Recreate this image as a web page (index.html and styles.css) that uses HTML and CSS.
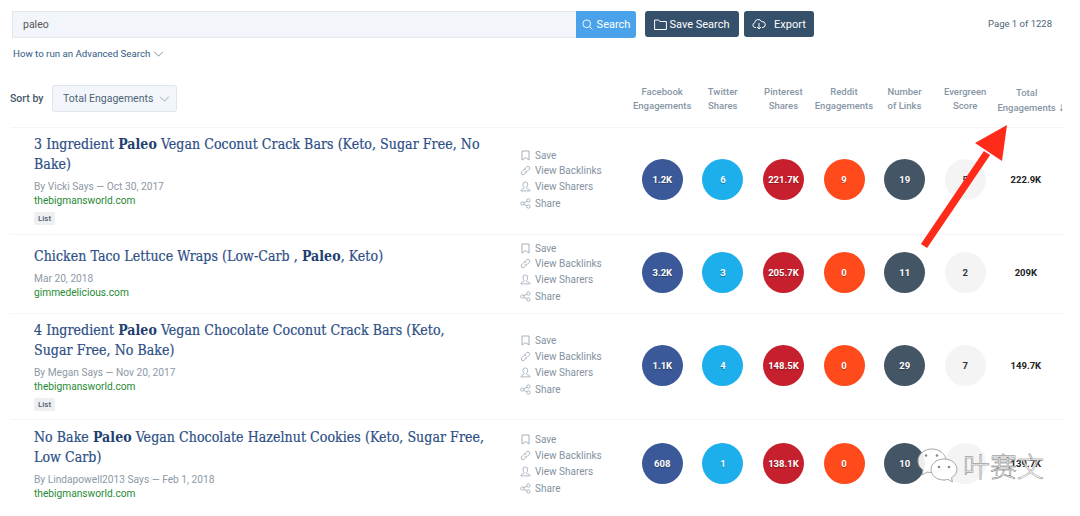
FILE: index.html
```html
<!DOCTYPE html>
<html lang="en">
<head>
  <meta charset="UTF-8" />
  <meta name="viewport" content="width=device-width, initial-scale=1.0"/>
  <title>Content Search - paleo</title>
  <link rel="stylesheet" href="styles.css">
</head>
<body>
  <svg class="defs" width="0" height="0">
    <symbol id="i-save" viewBox="0 0 10 11"><path d="M1.500 1h7v9L5 7.600 1.500 10z"/></symbol>
    <symbol id="i-link" viewBox="0 0 12 12"><path d="M5 4.200 7.400 1.800a2 2 0 0 1 2.800 2.800L7.800 7a2 2 0 0 1-2.600.2"/><path d="M7 7.800 4.600 10.200a2 2 0 0 1-2.800-2.800L4.200 5a2 2 0 0 1 2.600-.2"/></symbol>
    <symbol id="i-user" viewBox="0 0 12 12"><path d="M6 1a2.800 2.800 0 0 0-2.800 3c0 1.400.7 2.400 1.300 3 .2.600 0 1-.8 1.300C2.500 8.800 1.200 9.300 1 10.800h10c-.2-1.500-1.500-2-3.100-2.500-.8-.3-1-.7-.8-1.300.6-.6 1.300-1.600 1.300-3A2.800 2.800 0 0 0 6 1z"/></symbol>
    <symbol id="i-share" viewBox="0 0 12 12"><circle cx="2.600" cy="6" r="1.800"/><circle cx="9.200" cy="2.700" r="1.800"/><circle cx="9.200" cy="9.300" r="1.800"/><path d="M4.200 5.200 7.600 3.500M4.200 6.800l3.400 1.700"/></symbol>
    <symbol id="i-chev" viewBox="0 0 12 7"><path d="M1 1l5 5 5-5"/></symbol>
  </svg>

  <div class="page">
    <div class="topbar">
      <div class="search">
        <div class="search-input">paleo</div>
        <button class="search-btn">
          <svg class="btn-icon" viewBox="0 0 12 12"><circle cx="5.200" cy="5.200" r="4.200"/><path d="M8.300 8.300 11.300 11.300"/></svg>
          Search
        </button>
      </div>
      <button class="dark-btn save-btn">
        <svg class="btn-icon folder" viewBox="0 0 13 11"><path d="M.6 1h4l1.200 1.500h6.600v8H.6z"/></svg>
        Save Search
      </button>
      <button class="dark-btn export-btn">
        <svg class="btn-icon cloud" viewBox="0 0 14 11"><path d="M4 9H3a2.400 2.400 0 0 1-.3-4.700A3.600 3.600 0 0 1 9.600 3.200 2.900 2.900 0 0 1 11 9h-1"/><path d="M7 4.500v6M5 8.500l2 2 2-2"/></svg>
        Export
      </button>
      <div class="pager">Page 1 of 1228</div>
    </div>

    <a class="adv-link">How to run an Advanced Search
      <svg class="chev"><use href="#i-chev"/></svg>
    </a>

    <div class="sortbar">
      <span class="sort-label">Sort by</span>
      <div class="sort-select">Total Engagements <svg class="chev big"><use href="#i-chev"/></svg></div>
      <div class="columns">
        <div>Facebook<br>Engagements</div>
        <div>Twitter<br>Shares</div>
        <div>Pinterest<br>Shares</div>
        <div>Reddit<br>Engagements</div>
        <div>Number<br>of Links</div>
        <div>Evergreen<br>Score</div>
        <div class="sorted">Total<br>Engagements <span class="down">↓</span></div>
      </div>
    </div>

    <div class="row row-tall">
      <div class="info">
        <a class="title">3 Ingredient <b>Paleo</b> Vegan Coconut Crack Bars (Keto, Sugar Free, No Bake)</a>
        <div class="meta">By Vicki Says — Oct 30, 2017</div>
        <div class="domain">thebigmansworld.com</div>
        <span class="tag">List</span>
      </div>
      <div class="actions">
        <div class="act"><svg><use href="#i-save"/></svg>Save</div>
        <div class="act"><svg><use href="#i-link"/></svg>View Backlinks</div>
        <div class="act"><svg><use href="#i-user"/></svg>View Sharers</div>
        <div class="act"><svg><use href="#i-share"/></svg>Share</div>
      </div>
      <div class="stats">
        <div class="dot fb">1.2K</div>
        <div class="dot tw">6</div>
        <div class="dot pin">221.7K</div>
        <div class="dot red">9</div>
        <div class="dot links">19</div>
        <div class="dot ever">5</div>
        <div class="total">222.9K</div>
      </div>
    </div>

    <div class="row row-short">
      <div class="info">
        <a class="title">Chicken Taco Lettuce Wraps (Low-Carb , <b>Paleo</b>, Keto)</a>
        <div class="meta">Mar 20, 2018</div>
        <div class="domain">gimmedelicious.com</div>
      </div>
      <div class="actions">
        <div class="act"><svg><use href="#i-save"/></svg>Save</div>
        <div class="act"><svg><use href="#i-link"/></svg>View Backlinks</div>
        <div class="act"><svg><use href="#i-user"/></svg>View Sharers</div>
        <div class="act"><svg><use href="#i-share"/></svg>Share</div>
      </div>
      <div class="stats">
        <div class="dot fb">3.2K</div>
        <div class="dot tw">3</div>
        <div class="dot pin">205.7K</div>
        <div class="dot red">0</div>
        <div class="dot links">11</div>
        <div class="dot ever">2</div>
        <div class="total">209K</div>
      </div>
    </div>

    <div class="row row-tall">
      <div class="info">
        <a class="title">4 Ingredient <b>Paleo</b> Vegan Chocolate Coconut Crack Bars (Keto, Sugar Free, No Bake)</a>
        <div class="meta">By Megan Says — Nov 20, 2017</div>
        <div class="domain">thebigmansworld.com</div>
        <span class="tag">List</span>
      </div>
      <div class="actions">
        <div class="act"><svg><use href="#i-save"/></svg>Save</div>
        <div class="act"><svg><use href="#i-link"/></svg>View Backlinks</div>
        <div class="act"><svg><use href="#i-user"/></svg>View Sharers</div>
        <div class="act"><svg><use href="#i-share"/></svg>Share</div>
      </div>
      <div class="stats">
        <div class="dot fb">1.1K</div>
        <div class="dot tw">4</div>
        <div class="dot pin">148.5K</div>
        <div class="dot red">0</div>
        <div class="dot links">29</div>
        <div class="dot ever">7</div>
        <div class="total">149.7K</div>
      </div>
    </div>

    <div class="row row-last">
      <div class="info">
        <a class="title">No Bake <b>Paleo</b> Vegan Chocolate Hazelnut Cookies (Keto, Sugar Free, Low Carb)</a>
        <div class="meta">By Lindapowell2013 Says — Feb 1, 2018</div>
        <div class="domain">thebigmansworld.com</div>
      </div>
      <div class="actions">
        <div class="act"><svg><use href="#i-save"/></svg>Save</div>
        <div class="act"><svg><use href="#i-link"/></svg>View Backlinks</div>
        <div class="act"><svg><use href="#i-user"/></svg>View Sharers</div>
        <div class="act"><svg><use href="#i-share"/></svg>Share</div>
      </div>
      <div class="stats">
        <div class="dot fb">608</div>
        <div class="dot tw">1</div>
        <div class="dot pin">138.1K</div>
        <div class="dot red">0</div>
        <div class="dot links">10</div>
        <div class="dot ever"></div>
        <div class="total">139.7K</div>
      </div>
    </div>
  </div>

  <!-- annotation arrow on top of the screenshot -->
  <svg class="arrow" viewBox="0 0 100 130">
    <path d="M6 126 69 33" fill="none" stroke="#fe2b1a" stroke-width="7.500"/>
    <path d="M89 5 57 23 84 41z" fill="#fe2b1a"/>
  </svg>

  <!-- wechat watermark -->
  <div class="watermark">
    <svg class="wechat" viewBox="0 0 42 36">
      <path class="bub" d="M15 1C7.500 1 1 6 1 13c0 4 2 7 5 9l-1 5 5-3c1 .3 3 .5 5 .5 8 0 14-5 14-11.500S23 1 15 1z"/>
      <path class="bub" d="M27 11c-7.500 0-13 4.800-13 10.500S19.500 32 27 32c1.500 0 3-.2 4-.6l4.500 2.600-1-4.200c3-1.800 5.500-4.800 5.500-8.300C40 15.800 34.500 11 27 11z"/>
      <circle cx="9" cy="7.500" r="1.300"/><circle cx="20" cy="7.500" r="1.300"/><circle cx="22" cy="19" r="1.300"/><circle cx="32" cy="19" r="1.300"/>
    </svg>
    <span class="wm-text">叶赛文</span>
  </div>
</body>
</html>
```

FILE: styles.css
```css
* { box-sizing: border-box; }
html, body { height: 516px; overflow: hidden; }
body {
  margin: 0;
  background: #fff;
  color: #34495e;
  font-family: Roboto, "Liberation Sans", sans-serif;
  font-size: 10px;
  position: relative;
}
.defs { position: absolute; }
.page { padding: 11px 15px 0 10px; }

/* top bar */
.topbar {
  display: flex;
  align-items: flex-start;
  padding-left: 2px;
  height: 27px;
}
.search { display: flex; width: 624px; height: 27px; }
.search-input {
  flex: 1;
  background: #f2f6fa;
  border: 1px solid #e2e7ec;
  border-right: none;
  color: #555;
  font-size: 10.500px;
  line-height: 25px;
  padding-left: 10px;
}
.search-btn {
  width: 60px;
  background: #4aa3ea;
  color: #fff;
  border: none;
  border-radius: 0 3px 3px 0;
  font: 400 11px Roboto, sans-serif;
  padding: 0;
  display: flex;
  align-items: center;
  justify-content: center;
  gap: 4px;
}
.btn-icon { width: 11px; height: 11px; fill: none; stroke: currentColor; stroke-width: 1; }
.btn-icon.folder { width: 13px; }
.btn-icon.cloud { width: 14px; height: 12px; }
.dark-btn {
  height: 26px;
  background: #35506b;
  color: #fff;
  border: none;
  border-radius: 3px;
  font: 400 11px Roboto, sans-serif;
  padding: 0;
  display: flex;
  align-items: center;
  justify-content: center;
}
.save-btn { width: 94px; margin-left: 9px; gap: 2px; }
.export-btn { width: 70px; margin-left: 5px; gap: 8px; }
.pager { margin-left: auto; margin-right: 13px; line-height: 26px; color: #4d6478; font-size: 9.500px; }

.adv-link {
  display: block;
  margin: 10px 0 0 3px;
  color: #2f5a85;
  font-size: 9.700px;
  line-height: 12px;
}
.chev { width: 11px; height: 6px; fill: none; stroke: #6b7f92; stroke-width: 1; }
.chev.big { width: 11px; height: 6px; margin-left: 3px; stroke: #8a9aaa; }

/* sort + column heads */
.sortbar { display: flex; align-items: center; margin: 25px 0 15px; height: 27px; }
.sort-label { font-weight: 500; font-size: 10.500px; color: #47596b; width: 42px; }
.sort-select {
  width: 125px;
  height: 27px;
  background: #f2f6fa;
  border: 1px solid #dfe5ea;
  border-radius: 3px;
  color: #4f6477;
  font-size: 10.500px;
  line-height: 25px;
  padding-left: 10px;
  white-space: nowrap;
}
.columns {
  margin-left: auto;
  margin-right: 9px;
  padding-top: 2px;
  display: grid;
  grid-template-columns: repeat(7, 60.600px);
  text-align: center;
  color: #8796a5;
  font-size: 9.500px;
  font-weight: 500;
  line-height: 14px;
}
.columns > div { white-space: nowrap; }
.sorted { line-height: 15px; padding-left: 2px; }
.down { font-size: 12px; color: #6f8091; font-weight: 400; }

/* result rows */
.row {
  display: flex;
  align-items: center;
  border-top: 1px solid #f4f5f6;
}
.row-tall { height: 106.500px; }
.row-short { height: 79px; }
.row-last { height: 90px; align-items: flex-start; padding-top: 9px; }
.info { width: 510px; padding-left: 24px; padding-right: 34px; margin-top: -2px; }
.title {
  display: block;
  font-family: "DejaVu Serif Condensed", "DejaVu Serif", serif;
  font-size: 14px;
  letter-spacing: .06px;
  line-height: 20px;
  color: #2d4f86;
  -webkit-text-stroke: .2px #2d4f86;
}
.title b { color: #22406f; -webkit-text-stroke: 0; }
.meta { margin-top: 6px; color: #8c99a6; font-size: 10.200px; line-height: 14px; }
.domain { color: #1f8a35; font-size: 10.200px; line-height: 14px; }
.tag {
  display: inline-block;
  margin-top: 4px;
  background: #eeeff1;
  border-radius: 2px;
  color: #4f6070;
  font-size: 8px;
  font-weight: 500;
  line-height: 13px;
  padding: 0 4px;
}
.actions { width: 112px; margin-top: -2px; color: #8492a0; font-size: 10px; }
.act { display: flex; align-items: center; height: 16px; }
.act:first-child { height: 15px; }
.act:last-child { height: 17px; padding-top: 1px; }
.act svg { width: 11px; height: 11px; margin-right: 4px; fill: none; stroke: #8f9cab; stroke-width: .8; }
.stats {
  margin-top: -2px;
  display: grid;
  grid-template-columns: repeat(7, 60.600px);
  justify-items: center;
  align-items: center;
}
.row-last .stats { padding-top: 14px; margin-top: 0; }
.row-last .actions { margin-top: 3px; }
.dot {
  width: 41px;
  height: 41px;
  border-radius: 50%;
  color: #fff;
  font-weight: 700;
  font-size: 9.500px;
  line-height: 41px;
  text-align: center;
  text-shadow: 0 1px 1px rgba(0, 0, 0, .35);
}
.fb { background: #3b5998; }
.tw { background: #1dafec; }
.pin { background: #c6202e; }
.red { background: #ff4a1c; }
.links { background: #445566; }
.ever { background: #f4f4f4; color: #333; text-shadow: none; }
.total { color: #222; font-weight: 700; font-size: 9.500px; }

/* overlays */
.arrow { position: absolute; left: 918px; top: 120px; width: 100px; height: 130px; overflow: visible; }
.watermark { position: absolute; left: 917px; top: 448px; display: flex; align-items: center; gap: 4px; }
.wechat { width: 42px; height: 36px; fill: #8a8a8a; }
.bub { fill: rgba(255, 255, 255, .9); stroke: #a5a5a5; stroke-width: 1; }
.wm-text {
  font-family: "Noto Sans CJK SC", sans-serif;
  font-size: 27px;
  font-weight: 300;
  color: #fff;
  -webkit-text-stroke: .5px #777;
  line-height: 36px;
}
```
